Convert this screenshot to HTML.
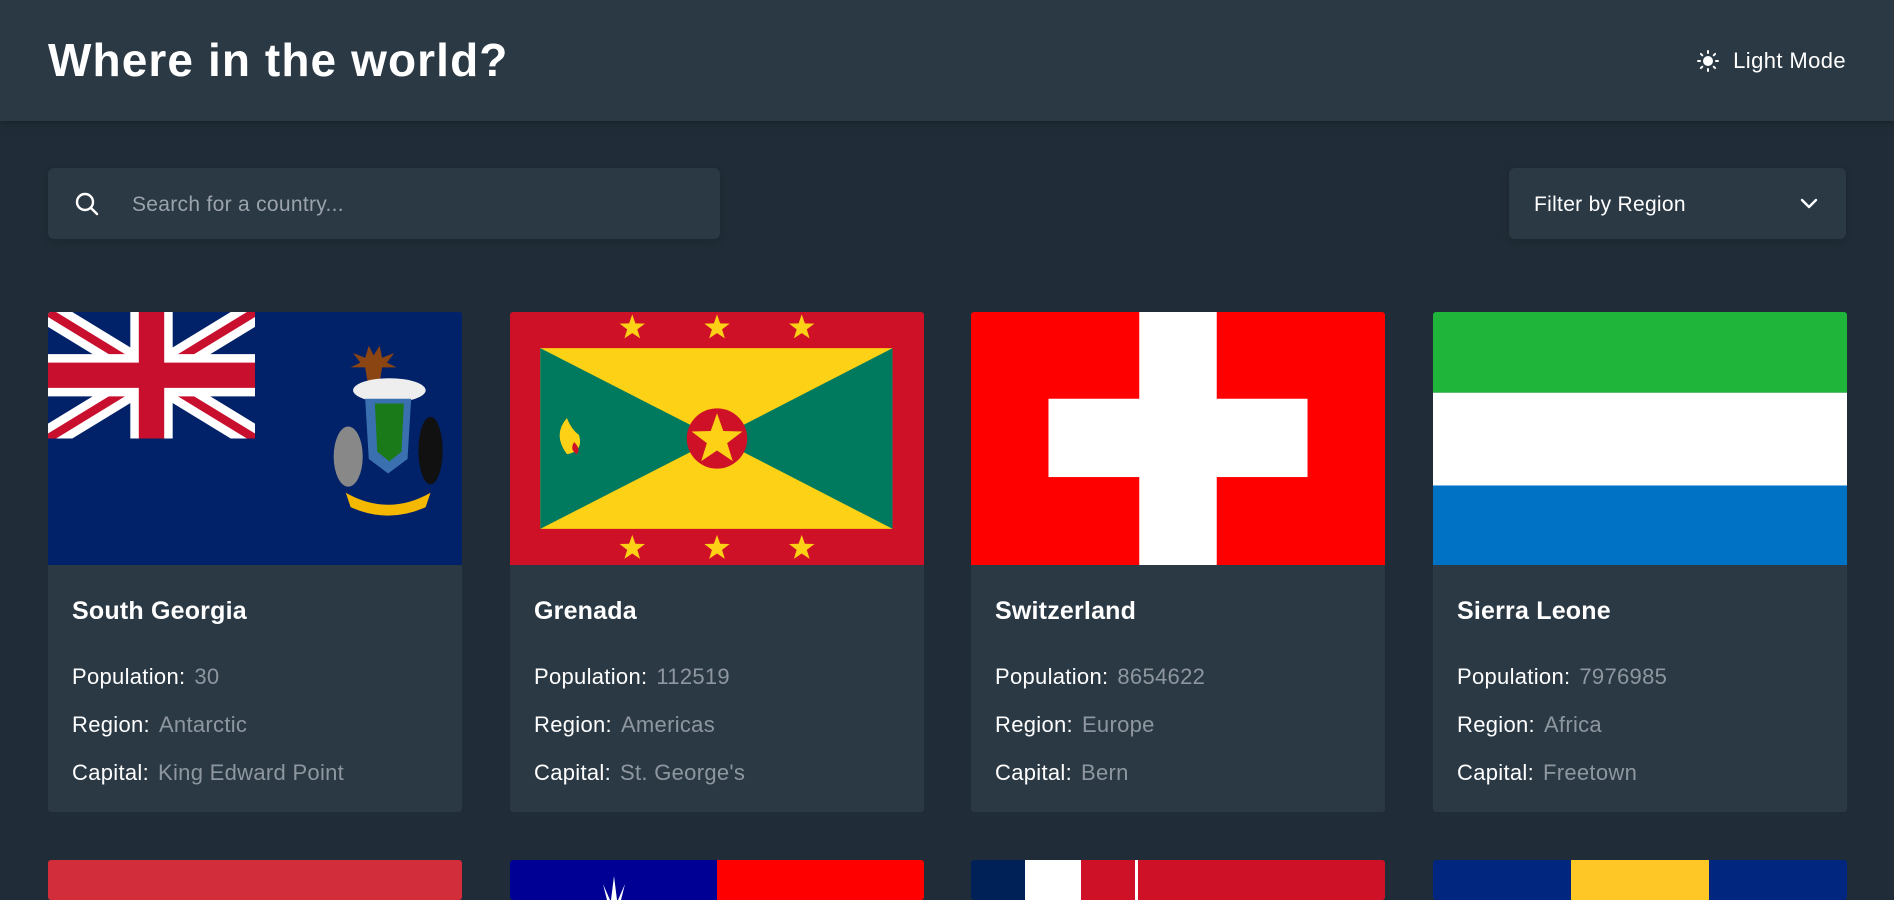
<!DOCTYPE html>
<html><head><meta charset="utf-8"><style>
*{box-sizing:border-box;margin:0;padding:0}
body{width:1894px;height:892px;overflow:hidden;background:#202c37;font-family:"Liberation Sans",sans-serif;color:#fff;position:relative}
header{position:absolute;left:0;top:0;width:1894px;height:121px;background:#2b3945;box-shadow:0 2px 6px rgba(0,0,0,.25)}
h1{position:absolute;left:48px;top:33px;font-size:46px;font-weight:700;letter-spacing:1.1px}
.mode{position:absolute;right:48px;top:48px;font-size:22px;letter-spacing:.4px;display:flex;align-items:center;gap:14px}
.search{position:absolute;left:48px;top:168px;width:672px;height:71px;background:#2b3945;border-radius:6px;box-shadow:0 2px 8px rgba(0,0,0,.15)}
.search span{position:absolute;left:84px;top:25px;font-size:21px;color:#9aa3ab;letter-spacing:.3px}
.search svg{position:absolute;left:26px;top:23px}
.filter{position:absolute;left:1509px;top:168px;width:337px;height:71px;background:#2b3945;border-radius:6px;box-shadow:0 2px 8px rgba(0,0,0,.15)}
.filter span{position:absolute;left:25px;top:25px;font-size:21px;letter-spacing:.3px}
.filter svg{position:absolute;right:28px;top:30px}
.card{position:absolute;top:312px;width:414px;height:500px;background:#2b3945;border-radius:3px;overflow:hidden}
.card svg{display:block}
.card h2{position:absolute;left:24px;top:285px;font-size:25px;font-weight:700;letter-spacing:.2px}
.card p{position:absolute;left:24px;font-size:22px;letter-spacing:.3px}
.card p b{font-weight:400;color:#8e979f;margin-left:9px}
.r2{position:absolute;top:860px;width:414px;height:40px;overflow:hidden;border-radius:3px}
</style></head><body>
<header><h1>Where in the world?</h1>
<div class="mode"><svg width="22" height="22" viewBox="0 0 22 22" fill="none" stroke="#fff" stroke-width="2" stroke-linecap="round"><circle cx="11" cy="11" r="4" fill="#fff"/><path d="M11 1v2M11 19v2M1 11h2M19 11h2M3.9 3.9l1.4 1.4M16.7 16.7l1.4 1.4M3.9 18.1l1.4-1.4M16.7 5.3l1.4-1.4"/></svg>Light Mode</div></header>
<div class="search"><svg width="26" height="26" viewBox="0 0 26 26" fill="none" stroke="#fff" stroke-width="2.4" stroke-linecap="round"><circle cx="11" cy="11" r="8"/><path d="M17 17l6 6"/></svg><span>Search for a country...</span></div>
<div class="filter"><span>Filter by Region</span><svg width="18" height="12" viewBox="0 0 18 12" fill="none" stroke="#fff" stroke-width="2.4" stroke-linecap="round" stroke-linejoin="round"><path d="M2 2l7 7 7-7"/></svg></div>

<div class="card" style="left:48px">
<svg width="414" height="253" viewBox="0 0 342 210" preserveAspectRatio="none">
<rect width="342" height="210" fill="#012169"/>
<g><clipPath id="c"><rect width="171" height="105"/></clipPath>
<g clip-path="url(#c)"><path d="M0 0L171 105M171 0L0 105" stroke="#fff" stroke-width="21"/><path d="M0 0L171 105M171 0L0 105" stroke="#c8102e" stroke-width="7"/><path d="M85.5 0v105M0 52.5h171" stroke="#fff" stroke-width="35"/><path d="M85.5 0v105M0 52.5h171" stroke="#c8102e" stroke-width="21"/></g></g>
<path d="M265 28l4 8 5-8 2 10 10-4-6 8 8 4h-12l-2 12h-10l-2-12h-12l8-4-6-8 10 4z" fill="#8b4513"/>
<ellipse cx="282" cy="65" rx="30" ry="10" fill="#eee"/>
<path d="M262 72h38l-3 50-16 12-16-12z" fill="#3a6fb0"/>
<path d="M270 76h24l-2 40-10 8-10-8z" fill="#1a7a1a"/>
<ellipse cx="248" cy="120" rx="12" ry="25" fill="#888"/>
<ellipse cx="316" cy="115" rx="10" ry="28" fill="#111"/>
<path d="M246 150q35 20 70 0l-4 12q-31 14-62 0z" fill="#f5b800"/>
</svg>
<h2>South Georgia</h2>
<p style="top:352px">Population:<b>30</b></p>
<p style="top:400px">Region:<b>Antarctic</b></p>
<p style="top:448px">Capital:<b>King Edward Point</b></p>
</div>

<div class="card" style="left:510px">
<svg width="414" height="253" viewBox="0 0 342 210" preserveAspectRatio="none">
<defs><path id="s" d="M0 -11L2.6 -3.6 10.5 -3.4 4.2 1.4 6.5 8.9 0 4.5 -6.5 8.9 -4.2 1.4 -10.5 -3.4 -2.6 -3.6z" fill="#fcd116"/></defs>
<rect width="342" height="210" fill="#ce1126"/>
<rect x="25" y="30" width="291" height="150" fill="#fcd116"/>
<path d="M25 30L171 105 25 180zM316 30L171 105 316 180z" fill="#007a5e"/>
<circle cx="171" cy="105" r="25" fill="#ce1126"/>
<use href="#s" transform="translate(171,106) scale(2)"/>
<use href="#s" x="101" y="13"/><use href="#s" x="171" y="13"/><use href="#s" x="241" y="13"/>
<use href="#s" x="101" y="196"/><use href="#s" x="171" y="196"/><use href="#s" x="241" y="196"/>
<path d="M47 88q-12 14 0 30q14 -2 10 -16q-6 -4 -10 -14z" fill="#fcd116"/><path d="M53 108q-4 6 2 10q4-4 -2-10z" fill="#ce1126"/>
</svg>
<h2>Grenada</h2>
<p style="top:352px">Population:<b>112519</b></p>
<p style="top:400px">Region:<b>Americas</b></p>
<p style="top:448px">Capital:<b>St. George's</b></p>
</div>

<div class="card" style="left:971px">
<svg width="414" height="253" viewBox="0 0 342 210" preserveAspectRatio="none">
<rect width="342" height="210" fill="#ff0000"/>
<rect x="139" y="0" width="64" height="210" fill="#fff"/>
<rect x="64" y="72" width="214" height="65" fill="#fff"/>
</svg>
<h2>Switzerland</h2>
<p style="top:352px">Population:<b>8654622</b></p>
<p style="top:400px">Region:<b>Europe</b></p>
<p style="top:448px">Capital:<b>Bern</b></p>
</div>

<div class="card" style="left:1433px">
<svg width="414" height="253" viewBox="0 0 342 210" preserveAspectRatio="none">
<rect width="342" height="67" fill="#1eb53a"/><rect y="67" width="342" height="77" fill="#fff"/><rect y="144" width="342" height="66" fill="#0072c6"/>
</svg>
<h2>Sierra Leone</h2>
<p style="top:352px">Population:<b>7976985</b></p>
<p style="top:400px">Region:<b>Africa</b></p>
<p style="top:448px">Capital:<b>Freetown</b></p>
</div>

<div class="r2" style="left:48px;background:#d22d3a"></div>
<div class="r2" style="left:510px;background:linear-gradient(90deg,#000095 50%,#ff0000 50%)"><svg width="207" height="40" style="position:absolute;left:0;top:0"><path d="M104 16l-3 24h6zM93 24l4 16h3zM115 24l-4 16h-3z" fill="#fff"/></svg></div>
<div class="r2" style="left:971px;background:linear-gradient(90deg,#002157 0 54px,#fff 54px 110px,#cf1127 110px 164px,#fff 164px 167px,#cf1127 167px)"></div>
<div class="r2" style="left:1433px;background:linear-gradient(90deg,#00267f 0 138px,#ffc726 138px 276px,#00267f 276px)"></div>
</body></html>
